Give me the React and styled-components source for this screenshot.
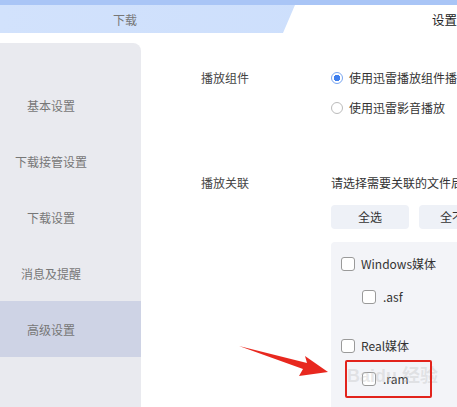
import React from 'react'
import styled, { createGlobalStyle } from 'styled-components'

const GlobalStyle = createGlobalStyle`
  html, body {
    margin: 0;
    padding: 0;
    background: #fff;
  }
  body {
    font-family: "Noto Sans CJK SC", "Noto Sans", sans-serif;
  }
`

const sideItems = ['基本设置', '下载接管设置', '下载设置', '消息及提醒', '高级设置']

const groups = [
  { name: 'Windows媒体', exts: ['.asf'] },
  { name: 'Real媒体', exts: ['.ram'] },
]

function App() {
  return (
    <Window>
      <GlobalStyle />
      <TopStrip />
      <TabBar>
        <Tab>下载</Tab>
        <ActiveTab>设置中心</ActiveTab>
      </TabBar>

      <Body>
        <Sidebar>
          {sideItems.map((item) => (
            <SideItem key={item} active={item === '高级设置'}>{item}</SideItem>
          ))}
        </Sidebar>

        <Main>
          <Section>
            <Label>播放组件</Label>
            <Options>
              <OptionRow>
                <Radio checked />
                <span>使用迅雷播放组件播放</span>
              </OptionRow>
              <OptionRow>
                <Radio />
                <span>使用迅雷影音播放</span>
              </OptionRow>
            </Options>
          </Section>

          <Section spaced>
            <Label>播放关联</Label>
            <Options>
              <OptionRow>请选择需要关联的文件后缀名</OptionRow>
              <Buttons>
                <Button>全选</Button>
                <Button>全不选</Button>
              </Buttons>
              <FileBox>
                {groups.map((g) => (
                  <Group key={g.name}>
                    <OptionRow>
                      <Check />
                      <span>{g.name}</span>
                    </OptionRow>
                    {g.exts.map((ext) => (
                      <SubRow key={ext}>
                        <Check />
                        <span>{ext}</span>
                      </SubRow>
                    ))}
                  </Group>
                ))}
              </FileBox>
            </Options>
          </Section>
        </Main>
      </Body>

      <Watermark>Bai<Paw>du</Paw> 经验</Watermark>
      <Arrow width="100" height="40" viewBox="0 0 100 40">
        <polygon points="2,2 70,19 68,12 91,28 62,32 66,25" fill="#e8281f" />
      </Arrow>
      <RedBox />
    </Window>
  )
}

export default App

const Window = styled.div`
  position: relative;
  width: 457px;
  height: 407px;
  overflow: hidden;
  background: #fff;
  white-space: nowrap;
`

const TopStrip = styled.div`
  height: 5px;
  background: #a9c5f6;
`

const TabBar = styled.div`
  display: flex;
  height: 28px;
  background: linear-gradient(90deg, #d2e2fc 0%, #cddffc 70%, #bcd3fa 100%);
`

const Tab = styled.div`
  flex: none;
  width: 250px;
  padding-right: 33px;
  display: flex;
  align-items: center;
  justify-content: center;
  font-size: 12px;
  color: #777;
`

const ActiveTab = styled.div`
  flex: 1;
  display: flex;
  align-items: center;
  padding-left: 149px;
  background: #fff;
  clip-path: polygon(12px 0, 100% 0, 100% 100%, 0 100%);
  font-size: 12.5px;
  color: #222;
`

const Body = styled.div`
  display: flex;
  margin-top: 10px;
  height: 364px;
`

const Sidebar = styled.div`
  flex: none;
  width: 141px;
  padding-top: 34px;
  box-sizing: border-box;
  background: #e9eaef;
  border-top-right-radius: 8px;
`

const SideItem = styled.div`
  height: 56px;
  display: flex;
  align-items: center;
  justify-content: center;
  padding-right: 39px;
  font-size: 12px;
  color: #777;
  background: ${(p) => (p.active ? '#ced3e5' : 'transparent')};
`

const Main = styled.div`
  flex: 1;
  padding: 25px 0 0 60px;
  font-size: 12px;
  color: #333;
`

const Section = styled.div`
  display: flex;
  margin-top: ${(p) => (p.spaced ? '55px' : '0')};
`

const Label = styled.div`
  flex: none;
  width: 130px;
  height: 20px;
  line-height: 20px;
  color: #444;
`

const Options = styled.div`
  display: flex;
  flex-direction: column;
  gap: 10px;
`

const OptionRow = styled.div`
  display: flex;
  align-items: center;
  gap: 6px;
  height: 20px;
  line-height: 20px;
`

const SubRow = styled(OptionRow)`
  margin: 13px 0 0 21px;
  gap: 7px;
`

const Radio = styled.span`
  flex: none;
  width: 12px;
  height: 12px;
  box-sizing: border-box;
  border-radius: 50%;
  border: 1px solid ${(p) => (p.checked ? '#7aa6f0' : '#bbb')};
  background: ${(p) =>
    p.checked ? 'radial-gradient(circle, #3f7fee 0 3px, #fff 3.5px)' : '#fff'};
`

const Check = styled.span`
  flex: none;
  width: 14px;
  height: 14px;
  box-sizing: border-box;
  border: 1px solid #9a9a9a;
  border-radius: 3px;
  background: #fff;
`

const Buttons = styled.div`
  display: flex;
  gap: 10px;
  margin-top: 2px;
`

const Button = styled.div`
  width: 78px;
  height: 24px;
  line-height: 24px;
  text-align: center;
  background: #eef1f7;
  border-radius: 4px;
  color: #333;
`

const FileBox = styled.div`
  width: 200px;
  height: 200px;
  margin-top: 3px;
  padding: 12px 0 0 10px;
  background: #f3f4f8;
  border-radius: 4px;
  display: flex;
  flex-direction: column;
  gap: 29px;
`

const Group = styled.div`
  display: flex;
  flex-direction: column;
`

const Watermark = styled.div`
  position: absolute;
  left: 347px;
  top: 361px;
  font-size: 18px;
  font-weight: bold;
  font-family: "Liberation Sans", "Noto Sans CJK SC", sans-serif;
  color: rgba(190, 190, 190, 0.35);
  pointer-events: none;
`

const Paw = styled.span`
  color: rgba(190, 190, 190, 0.35);
`

const Arrow = styled.svg`
  position: absolute;
  left: 237px;
  top: 344px;
`

const RedBox = styled.div`
  position: absolute;
  left: 345px;
  top: 360px;
  width: 87px;
  height: 38px;
  box-sizing: border-box;
  border: 2px solid #e2231c;
  border-radius: 2px;
`
